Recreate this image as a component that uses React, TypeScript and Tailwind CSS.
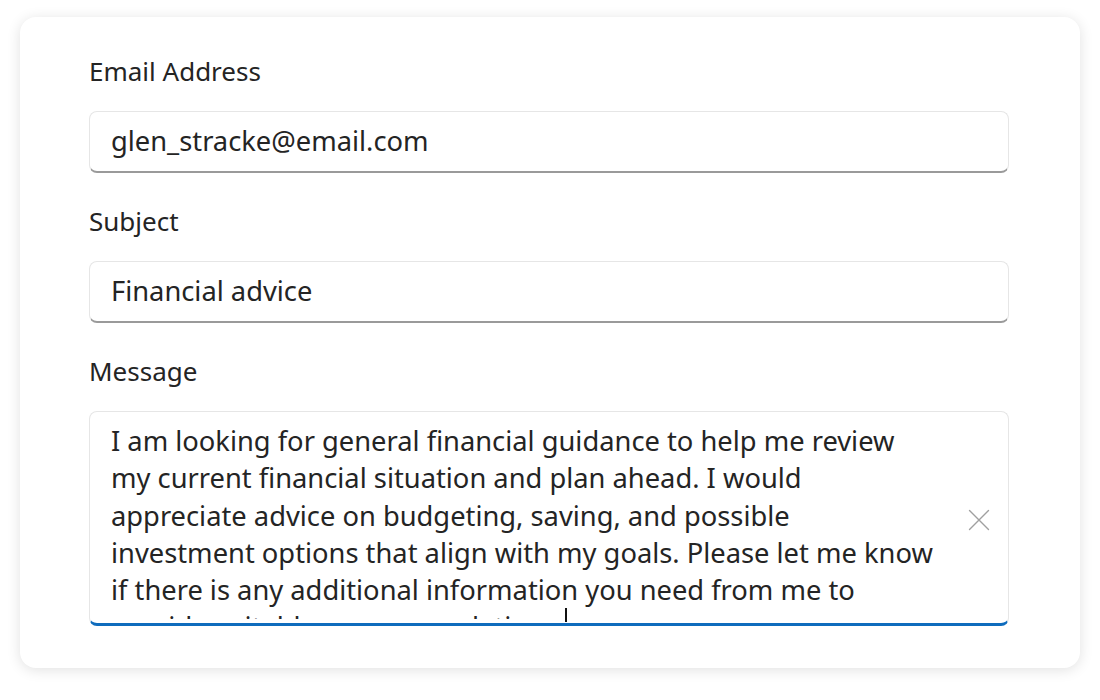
const messageLines = [
  "I am looking for general financial guidance to help me review",
  "my current financial situation and plan ahead. I would",
  "appreciate advice on budgeting, saving, and possible",
  "investment options that align with my goals. Please let me know",
  "if there is any additional information you need from me to",
  "provide suitable recommendations.",
];

function Field({ label, value }: { label: string; value: string }) {
  return (
    <div className="flex flex-col">
      <label className="leading-[37px] text-[26px] text-[#242424]">{label}</label>
      <div className="mt-[21px] h-[62px] flex items-center rounded-[8px] border border-[#e6e6e6] border-b-[2px] border-b-[#9a9a9a] bg-white px-[21px]">
        <span className="text-[27.3px] text-[#242424]">{value}</span>
      </div>
    </div>
  );
}

export default function App() {
  return (
    <div
      className="w-[1100px] h-[700px] bg-white pt-[17px] px-[20px]"
      style={{ fontFamily: '"Noto Sans", "Open Sans", sans-serif' }}
    >
      <div className="h-[651px] rounded-[16px] bg-white shadow-[0_2px_14px_rgba(0,0,0,0.12)] pt-[36px] pl-[69px] pr-[71px] flex flex-col">
        <Field label="Email Address" value="glen_stracke@email.com" />
        <div className="mt-[30px]">
          <Field label="Subject" value="Financial advice" />
        </div>
        <div className="mt-[30px] flex flex-col">
          <label className="leading-[37px] text-[26px] text-[#242424]">Message</label>
          <div className="relative mt-[21px] h-[215px] rounded-[8px] border border-[#e6e6e6] border-b-[3px] border-b-[#0f6cbd] bg-white overflow-hidden">
            {/* scroll area stops a few px above the focus underline */}
            <div className="h-[207px] overflow-hidden pt-[10px] pl-[21px] pr-[60px] text-[27.3px] leading-[37.25px] text-[#242424]">
              {messageLines.map((line, i) => (
                <div key={i} className="whitespace-nowrap">
                  {line}
                </div>
              ))}
            </div>
            {/* text caret */}
            <span className="absolute left-[475px] top-[196px] w-[2px] h-[14px] bg-[#111111]" />
            <button className="absolute right-[18px] top-[97px] w-[22px] h-[22px] flex items-center justify-center">
              <svg width="22" height="22" viewBox="0 0 22 22" fill="none">
                <path d="M1.5 1.5 L20.5 20.5 M20.5 1.5 L1.5 20.5" stroke="#a0a0a0" strokeWidth="1.4" strokeLinecap="round" />
              </svg>
            </button>
          </div>
        </div>
      </div>
    </div>
  );
}
